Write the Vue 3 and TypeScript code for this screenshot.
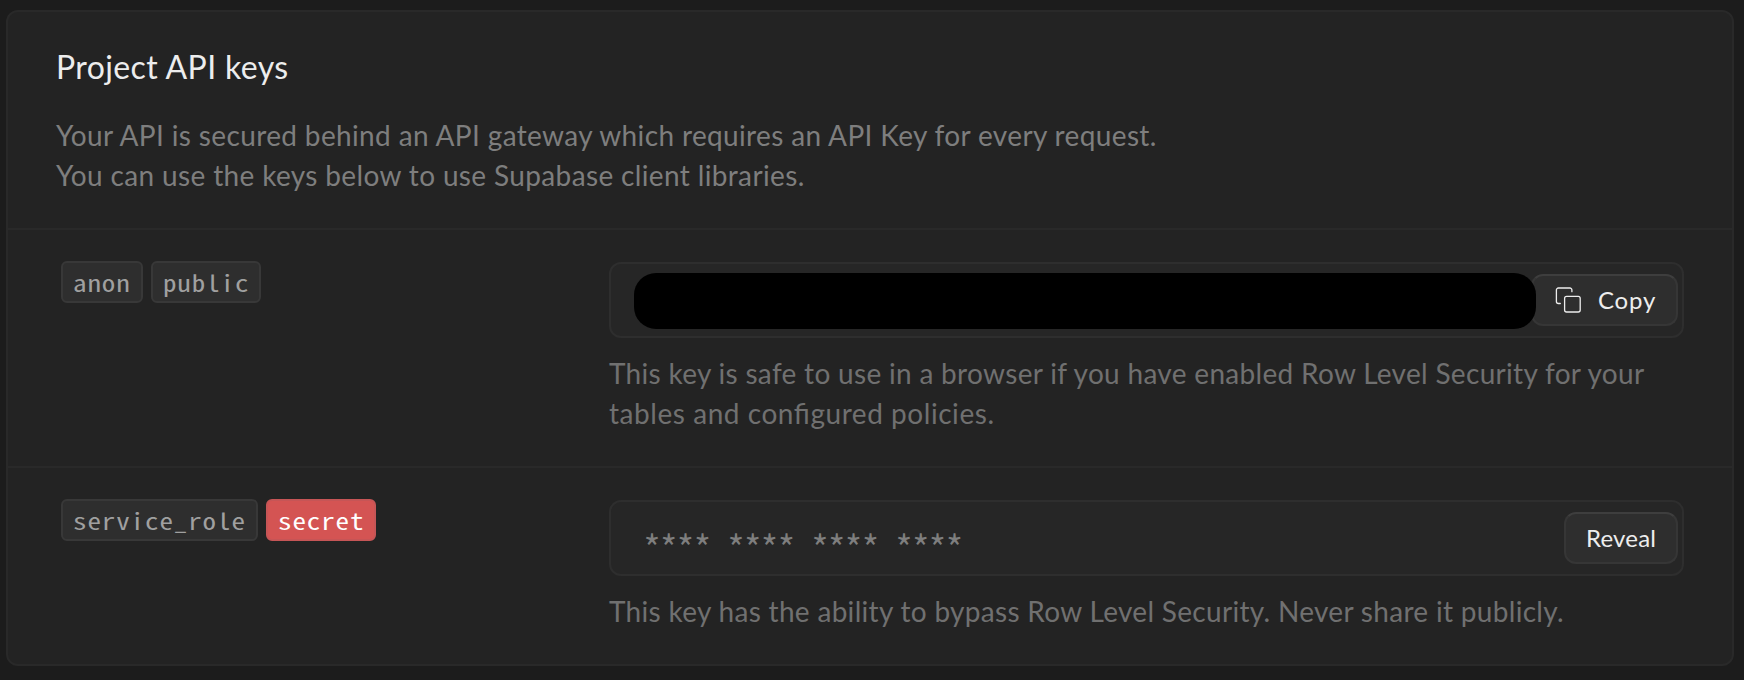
<script setup lang="ts">
interface ApiKey {
  id: string
  tags: { label: string; danger?: boolean }[]
  help: { text: string; cls: string }[]
  hidden: boolean
}

const intro = [
  { text: 'Your API is secured behind an API gateway which requires an API Key for every request.', cls: 'intro-a' },
  { text: 'You can use the keys below to use Supabase client libraries.', cls: 'intro-b' },
]

const keys: ApiKey[] = [
  {
    id: 'anon',
    tags: [{ label: 'anon' }, { label: 'public' }],
    help: [
      { text: 'This key is safe to use in a browser if you have enabled Row Level Security for your', cls: 'help-a' },
      { text: 'tables and configured policies.', cls: 'help-b' },
    ],
    hidden: false,
  },
  {
    id: 'service',
    tags: [{ label: 'service_role' }, { label: 'secret', danger: true }],
    help: [
      { text: 'This key has the ability to bypass Row Level Security. Never share it publicly.', cls: 'help-c' },
    ],
    hidden: true,
  },
]

// Monospace cell is 14.4px wide; 24px covers the padding and border.
const tagWidth = (label: string): string => `${(label.length * 14.4 + 24).toFixed(1)}px`
</script>

<template>
  <main class="page">
    <section class="card">
      <header class="head">
        <h2>Project API keys</h2>
        <p v-for="line in intro" :key="line.cls"><span :class="line.cls">{{ line.text }}</span></p>
      </header>

      <div v-for="k in keys" :key="k.id" class="row">
        <div class="tags">
          <code
            v-for="t in k.tags"
            :key="t.label"
            :class="['tag', { danger: t.danger }]"
            :style="{ width: tagWidth(t.label) }"
          ><span>{{ t.label }}</span></code>
        </div>
        <div class="field">
          <div class="input">
            <template v-if="k.hidden">
              <span class="stars">**** **** **** ****</span>
              <button type="button" class="btn reveal"><span>Reveal</span></button>
            </template>
            <template v-else>
              <span class="mask"></span>
              <button type="button" class="btn copy">
                <svg width="28" height="28" viewBox="0 0 28 28" fill="none" stroke="currentColor" stroke-width="1.3" stroke-linecap="round">
                  <path d="M17.9 5.7V4a2 2 0 0 0-2-2H4.4a2 2 0 0 0-2 2v11.5a2 2 0 0 0 2 2h1.9" />
                  <rect x="10.6" y="10.4" width="15.6" height="15.6" rx="2" />
                </svg>
                <span>Copy</span>
              </button>
            </template>
          </div>
          <div class="help">
            <p v-for="h in k.help" :key="h.cls"><span :class="h.cls">{{ h.text }}</span></p>
          </div>
        </div>
      </div>
    </section>
  </main>
</template>

<style>
html,
body {
  margin: 0;
  background: #1c1c1c;
}
</style>

<style scoped>
* {
  box-sizing: border-box;
}
.page {
  height: 680px;
  padding: 10px 10px 14px 6px;
  background: #1c1c1c;
  font-family: Lato, "Liberation Sans", sans-serif;
  overflow: hidden;
}
.card {
  height: 656px;
  border: 2px solid #292929;
  border-radius: 12px;
  background: #232323;
}
.head {
  height: 216px;
  padding: 31px 48px 0;
}
h2 {
  margin: 0 0 24px;
  font-size: 32px;
  line-height: 48px;
  font-weight: 400;
  letter-spacing: 0.38px;
  color: #ededed;
}
p {
  margin: 0;
  font-size: 28px;
  line-height: 40px;
  letter-spacing: 0.36px;
  color: #7e7e7e;
  white-space: nowrap;
}
.row {
  display: grid;
  grid-template-columns: 548px 1075px;
  height: 238px;
  padding: 32px 0 0 53px;
  border-top: 2px solid #292929;
}
.row:last-child {
  height: 198px;
}
.tags {
  display: flex;
  align-items: flex-start;
  gap: 8px;
  margin-top: -1px;
}
.tag {
  height: 42px;
  padding: 0 10px;
  border: 2px solid #383838;
  border-radius: 6px;
  background: #2e2e2e;
  color: #a0a0a0;
  font-family: "Noto Sans Mono CJK SC", "Liberation Mono", monospace;
  font-size: 22.5px;
  line-height: 38px;
  white-space: nowrap;
}
.tag span {
  display: inline-block;
  letter-spacing: 0.75px;
  transform: scaleX(1.2);
  transform-origin: left center;
}
.tag.danger {
  border-color: #c65556;
  background: #d45453;
  color: #fff;
}
.input {
  display: flex;
  align-items: center;
  justify-content: space-between;
  height: 76px;
  padding: 0 4px 0 23px;
  border: 2px solid #2e2e2e;
  border-radius: 12px;
  background: #262626;
}
.mask {
  position: relative;
  z-index: 1;
  width: 902px;
  height: 56px;
  margin-top: 2px;
  border-radius: 22px;
  background: #000;
}
.stars {
  margin-top: 15px;
  padding-left: 9px;
  font-family: "Noto Sans Mono CJK SC", "Liberation Mono", monospace;
  font-size: 36px;
  line-height: 40px;
  letter-spacing: -1.2px;
  color: #7e7e7e;
}
.btn {
  display: flex;
  align-items: center;
  height: 52px;
  padding: 0;
  border: 2px solid #363636;
  border-top-color: #3e3e3e;
  border-radius: 12px;
  background: #2e2e2e;
  color: #ededed;
  font-family: inherit;
  font-size: 24px;
  line-height: 32px;
}
.copy {
  width: 147px;
  margin-left: -5px;
  padding-left: 21px;
  gap: 16px;
  letter-spacing: 0.8px;
}
.reveal {
  width: 114px;
  padding-left: 20px;
  letter-spacing: 0.2px;
}
.help {
  margin-top: 15px;
}
.help p {
  letter-spacing: 0.31px;
  color: #707070;
}
.help .help-b {
  letter-spacing: 0.55px;
  font-feature-settings: "liga" 1;
}
</style>
